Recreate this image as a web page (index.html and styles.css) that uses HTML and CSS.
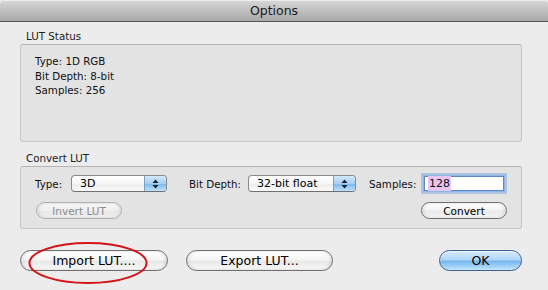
FILE: index.html
```html
<!DOCTYPE html>
<html>
<head>
<meta charset="utf-8">
<link rel="stylesheet" href="styles.css">
</head>
<body>
<div class="window">
  <div class="titlebar">Options</div>
  <div class="content">
    <div class="group-label first">LUT Status</div>
    <div class="box status">
      <div>Type: 1D RGB</div>
      <div>Bit Depth: 8-bit</div>
      <div>Samples: 256</div>
    </div>
    <div class="group-label">Convert LUT</div>
    <div class="box convert">
      <div class="row">
        <span class="lbl lbl-type">Type:</span>
        <div class="popup popup-type"><span class="val">3D</span><span class="arrows"><svg width="7" height="10" viewBox="0 0 7 10"><path d="M3.5 0.5 L6.5 4 L0.5 4 Z M3.5 9.5 L6.5 6 L0.5 6 Z" fill="#222"/></svg></span></div>
        <span class="lbl lbl-depth">Bit Depth:</span>
        <div class="popup popup-depth"><span class="val">32-bit float</span><span class="arrows"><svg width="7" height="10" viewBox="0 0 7 10"><path d="M3.5 0.5 L6.5 4 L0.5 4 Z M3.5 9.5 L6.5 6 L0.5 6 Z" fill="#222"/></svg></span></div>
        <span class="lbl lbl-samples">Samples:</span>
        <div class="field"><span class="sel">128</span></div>
      </div>
      <div class="row row2">
        <div class="btn small disabled">Invert LUT</div>
        <div class="btn small convert-btn">Convert</div>
      </div>
    </div>
    <div class="actions">
      <div class="btn big import">Import LUT....</div>
      <div class="btn big export">Export LUT...</div>
      <div class="btn big ok">OK</div>
    </div>
  </div>
  <svg class="annot" width="124" height="46" viewBox="0 0 124 46"><ellipse cx="62" cy="23" rx="58.5" ry="20" fill="none" stroke="#d4141a" stroke-width="2"/></svg>
</div>
</body>
</html>
```
FILE: styles.css
```css
html, body {
  margin: 0;
  padding: 0;
  background: #ececec;
}
body {
  font-family: "DejaVu Sans", sans-serif;
  color: #111;
}
.window {
  position: relative;
  width: 548px;
  height: 290px;
  background: #ececec;
  overflow: hidden;
}
.titlebar {
  height: 21px;
  line-height: 22px;
  text-align: center;
  font-size: 12.5px;
  color: #1a1a1a;
  background: linear-gradient(#d9d9d9, #c4c4c4 40%, #a9a9a9);
  border-bottom: 1px solid #555;
  box-shadow: inset 0 1px 0 #ececec;
  border-radius: 4px 4px 0 0;
}
.content {
  padding: 0 26px 0 20px;
}
.group-label {
  font-size: 10.3px;
  line-height: 15px;
  padding-left: 6px;
  margin-top: 9px;
  color: #222;
}
.group-label.first {
  margin-top: 7px;
}
.box {
  background: #e3e3e3;
  border: 1px solid #c6c6c6;
  border-top-color: #b4b4b4;
  border-radius: 3px;
}
.status {
  box-sizing: border-box;
  height: 98px;
  padding: 9px 0 0 14px;
  font-size: 10.3px;
  line-height: 14.5px;
  color: #111;
}
.convert {
  box-sizing: border-box;
  height: 63px;
  padding: 6px 14px 0 14px;
  display: flex;
  flex-direction: column;
  gap: 8px;
}
.row {
  display: flex;
  align-items: center;
  height: 21px;
}
.row2 {
  height: 17px;
  justify-content: space-between;
  padding-left: 1px;
}
.lbl {
  font-size: 10.3px;
  color: #111;
}
.lbl-type { width: 36px; }
.lbl-depth { width: 59px; margin-left: 22px; }
.lbl-samples { width: 52px; margin-left: 13px; }
.popup {
  box-sizing: border-box;
  height: 17px;
  border: 1px solid #8a8a8a;
  border-bottom-color: #707070;
  border-radius: 4px;
  background: linear-gradient(#ffffff, #f6f6f6 50%, #ececec 51%, #f9f9f9);
  display: flex;
  align-items: stretch;
  overflow: hidden;
}
.popup-type { width: 96px; }
.popup-depth { width: 108px; }
.popup .val {
  flex: 1;
  font-size: 11px;
  line-height: 15px;
  padding-left: 8px;
  color: #000;
}
.popup .arrows {
  width: 21px;
  border-left: 1px solid #7c9fc4;
  background: linear-gradient(#d4e9fb, #a5cff5 50%, #7ab6ee 51%, #bfe1fb);
  display: flex;
  align-items: center;
  justify-content: center;
}
.popup .arrows svg { display: block; }
.field {
  box-sizing: border-box;
  width: 80px;
  height: 15px;
  margin: 0 0 0 3px;
  background: #fff;
  border: 1px solid #5b8ac6;
  box-shadow: 0 0 0 1px #8fb5e3, 0 0 0 3px rgba(130, 170, 225, 0.55);
  display: flex;
  align-items: center;
  padding-left: 3px;
}
.field .sel {
  font-size: 11px;
  line-height: 15px;
  background: #e8c6f3;
  color: #111;
  padding: 0 1px;
}
.btn {
  box-sizing: border-box;
  display: flex;
  align-items: center;
  justify-content: center;
  border: 1px solid #6e6e6e;
  background: linear-gradient(#ffffff, #f5f5f5 45%, #e9e9e9 55%, #f7f7f7);
  box-shadow: inset 2px 0 3px rgba(0,0,0,0.08), inset -2px 0 3px rgba(0,0,0,0.08);
  color: #000;
}
.btn.small {
  height: 17px;
  border-radius: 9px;
  font-size: 10.5px;
}
.btn.disabled {
  width: 86px;
  color: #8c8c8c;
  border-color: #b0b0b0;
  background: linear-gradient(#f7f7f7, #efefef 50%, #e7e7e7 51%, #f0f0f0);
}
.convert-btn {
  width: 86px;
}
.actions {
  display: flex;
  margin-top: 21px;
  height: 21px;
}
.btn.big {
  height: 21px;
  border-radius: 11px;
  font-size: 12.5px;
}
.import { width: 148px; }
.export { width: 147px; margin-left: 18px; }
.ok {
  width: 83px;
  margin-left: auto;
  border-color: #3f5f8f !important;
  background: linear-gradient(#d6ebfc, #b0d6f8 45%, #79b7ef 55%, #a6d5fa 85%, #c9e7fd) !important;
  box-shadow: inset 0 1px 1px rgba(255,255,255,0.6);
}
.annot {
  position: absolute;
  left: 26px;
  top: 240px;
}
```
